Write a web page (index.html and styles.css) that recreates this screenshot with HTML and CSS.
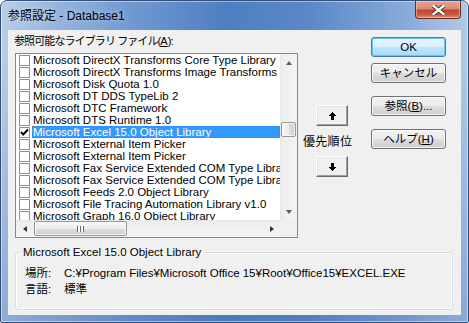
FILE: index.html
```html
<!DOCTYPE html>
<html lang="ja">
<head>
    <meta charset="UTF-8">
    <title>参照設定 - Database1</title>
    <link rel="stylesheet" href="styles.css">
</head>
<body>
    <div class="window">
        <div class="titlebar">
            <span class="title">参照設定 - Database1</span>
            <div class="close-btn">
                <svg width="13" height="10" viewBox="0 0 13 10">
                    <path d="M1.5 1 L11.5 9 M11.5 1 L1.5 9" stroke="#4a2a24" stroke-width="4.2" stroke-linecap="square"/>
                    <path d="M1.5 1 L11.5 9 M11.5 1 L1.5 9" stroke="#fff" stroke-width="2.4" stroke-linecap="square"/>
                </svg>
            </div>
        </div>

        <div class="client">
            <div class="top">
                <div class="list-col">
                    <div class="list-label">参照可能なライブラリ ファイル(<u>A</u>):</div>
                    <div class="listbox">
                        <div class="items">
                            <div class="row"><span class="box"></span><span class="name">Microsoft DirectX Transforms Core Type Library</span></div>
                            <div class="row"><span class="box"></span><span class="name">Microsoft DirectX Transforms Image Transforms Type Library</span></div>
                            <div class="row"><span class="box"></span><span class="name">Microsoft Disk Quota 1.0</span></div>
                            <div class="row"><span class="box"></span><span class="name">Microsoft DT DDS TypeLib 2</span></div>
                            <div class="row"><span class="box"></span><span class="name">Microsoft DTC Framework</span></div>
                            <div class="row"><span class="box"></span><span class="name">Microsoft DTS Runtime 1.0</span></div>
                            <div class="row selected">
                                <span class="box checked">
                                    <svg width="9" height="9" viewBox="0 0 9 9"><path d="M1 4 L3.3 6.5 L8 1.5" stroke="#000" stroke-width="1.9" fill="none"/></svg>
                                </span>
                                <span class="name">Microsoft Excel 15.0 Object Library</span>
                            </div>
                            <div class="row"><span class="box"></span><span class="name">Microsoft External Item Picker</span></div>
                            <div class="row"><span class="box"></span><span class="name">Microsoft External Item Picker</span></div>
                            <div class="row"><span class="box"></span><span class="name">Microsoft Fax Service Extended COM Type Library</span></div>
                            <div class="row"><span class="box"></span><span class="name">Microsoft Fax Service Extended COM Type Library</span></div>
                            <div class="row"><span class="box"></span><span class="name">Microsoft Feeds 2.0 Object Library</span></div>
                            <div class="row"><span class="box"></span><span class="name">Microsoft File Tracing Automation Library v1.0</span></div>
                            <div class="row"><span class="box"></span><span class="name">Microsoft Graph 16.0 Object Library</span></div>
                        </div>
                        <div class="vscroll">
                            <div class="sb-btn"><span class="tri up"></span></div>
                            <div class="sb-track"><div class="thumb-v"></div></div>
                            <div class="sb-btn"><span class="tri down"></span></div>
                        </div>
                        <div class="hscroll">
                            <div class="sb-btn"><span class="tri left"></span></div>
                            <div class="sb-track"><div class="thumb-h"><span class="grip"></span></div></div>
                            <div class="sb-btn"><span class="tri right"></span></div>
                        </div>
                        <div class="corner"></div>
                    </div>
                </div>

                <div class="priority">
                    <button class="classic">
                        <svg width="7" height="8" viewBox="0 0 7 8" shape-rendering="crispEdges"><path d="M3 0h1v1h1v1h1v1h1v1h-2v4h-3v-4h-2v-1h1v-1h1v-1h1z" fill="#000"/></svg>
                    </button>
                    <div class="priority-label">優先順位</div>
                    <button class="classic">
                        <svg width="7" height="8" viewBox="0 0 7 8" shape-rendering="crispEdges"><path d="M2 0h3v4h2v1h-1v1h-1v1h-1v1h-1v-1h-1v-1h-1v-1h-1v-1h2z" fill="#000"/></svg>
                    </button>
                </div>

                <div class="actions">
                    <button class="btn default">OK</button>
                    <button class="btn">キャンセル</button>
                    <button class="btn gap">参照(<u>B</u>)...</button>
                    <button class="btn gap">ヘルプ(<u>H</u>)</button>
                </div>
            </div>

            <fieldset class="details">
                <legend>Microsoft Excel 15.0 Object Library</legend>
                <div class="detail-grid">
                    <span>場所:</span><span>C:¥Program Files¥Microsoft Office 15¥Root¥Office15¥EXCEL.EXE</span>
                    <span>言語:</span><span>標準</span>
                </div>
            </fieldset>
        </div>
    </div>
</body>
</html>
```

FILE: styles.css
```css
body {margin: 0; font-family: "Liberation Sans", "Noto Sans CJK JP", sans-serif; font-size: 11.5px; color: #000}
button {font-family: inherit; font-size: 11.5px; color: #000; padding: 0; margin: 0}
u {text-decoration: underline; text-underline-offset: 1px}

/* window frame */
.window {width: 469px; height: 323px; box-sizing: border-box; border: 1px solid #34507a; border-radius: 7px 7px 2px 2px; padding: 0 7px 7px; display: flex; flex-direction: column;
    background: linear-gradient(to bottom, rgba(255,255,255,0) 0, rgba(255,255,255,0) 60px, rgba(70,110,180,0.35) 100%),
                linear-gradient(to right, #b8cee9 0%, #9ab7df 10%, #7099d0 28%, #4f7fc2 48%, #5a88c7 66%, #86a9d9 86%, #b2c9e7 100%);
    box-shadow: inset 0 0 0 1px rgba(255,255,255,0.45)}
.titlebar {height: 29px; display: flex; align-items: flex-start}
.title {margin-top: 8px; font-size: 12px; line-height: 15px; text-shadow: 0 0 6px rgba(255,255,255,0.6)}
.close-btn {margin-left: auto; width: 46px; height: 18px; box-sizing: border-box; border: 1px solid #6e2b20; border-top: none; border-radius: 0 0 4px 4px; display: flex; align-items: center; justify-content: center;
    background: linear-gradient(to bottom, #e8a493 0%, #d98a76 45%, #c3472e 55%, #c95a3c 80%, #e69478 100%);
    box-shadow: inset 0 0 0 1px rgba(255,220,210,0.45)}

/* client area */
.client {flex: 1; background: #f0f0f0; display: flex; flex-direction: column}
.top {display: flex}
.list-col {padding-left: 7px}
.list-label {margin: 4px 0 5px -1px; line-height: 14px; font-size: 11px; letter-spacing: -0.9px}
.list-label u {letter-spacing: 0}
.listbox {width: 283px; height: 185px; box-sizing: border-box; border: 1px solid #828790; background: #fff; display: grid; grid-template-columns: 1fr 17px; grid-template-rows: 1fr 17px}
.items {overflow: hidden}
.row {height: 12px; display: flex; align-items: center; white-space: nowrap; line-height: 12px}
.box {width: 11px; height: 11px; box-sizing: border-box; border: 1px solid #8f8f8f; background: #fff; margin: 0 2px 0 3px; flex: none; display: flex; align-items: center; justify-content: center}
.name {flex: 1; padding-left: 1px; height: 12px}
.selected .name {background: #3399ff; color: #fff; outline: 1px dotted #cc6600; outline-offset: -1px}

/* scrollbars */
.vscroll {display: flex; flex-direction: column; background: linear-gradient(to right, #e2e2e2 0, #ececec 1px, #f5f5f5 100%)}
.hscroll {display: flex; background: linear-gradient(to bottom, #e2e2e2 0, #ececec 1px, #f5f5f5 100%)}
.sb-btn {width: 17px; height: 17px; flex: none; display: flex; align-items: center; justify-content: center}
.sb-track {flex: 1}
.corner {background: #f0f0f0}
.tri {width: 0; height: 0; border: 0 solid transparent}
.tri.up {border-width: 0 3.5px 4px; border-bottom-color: #5b5b5b}
.tri.down {border-width: 4px 3.5px 0; border-top-color: #5b5b5b}
.tri.left {border-width: 3.5px 4px 3.5px 0; border-right-color: #333}
.tri.right {border-width: 3.5px 0 3.5px 4px; border-left-color: #333}
.thumb-v {margin: 51px 0 0 1px; width: 15px; height: 15px; box-sizing: border-box; border: 1px solid #979797; border-radius: 2px;
    background: linear-gradient(to right, #f6f6f6 0%, #ececec 50%, #dcdcdc 51%, #d0d0d0 100%); box-shadow: inset 0 0 0 1px rgba(255,255,255,0.7)}
.thumb-h {margin: 1px 0 0 1px; width: 93px; height: 15px; box-sizing: border-box; border: 1px solid #979797; border-radius: 2px; display: flex; align-items: center; justify-content: center;
    background: linear-gradient(to bottom, #f6f6f6 0%, #ececec 50%, #dcdcdc 51%, #d0d0d0 100%); box-shadow: inset 0 0 0 1px rgba(255,255,255,0.7)}
.grip {width: 7px; height: 6px; background: repeating-linear-gradient(to right, #6a6a6a 0 1px, #fafafa 1px 3px)}

/* move up / down */
.priority {width: 73px; padding: 75px 0 0 7px; box-sizing: border-box; display: flex; flex-direction: column; align-items: flex-start}
.classic {width: 32px; height: 21px; margin-left: 11px; box-sizing: border-box; background: #f0f0f0; border: 1px solid; border-color: #fff #696969 #696969 #fff; box-shadow: inset -1px -1px 0 #a0a0a0, inset 1px 1px 0 #e3e3e3; display: flex; align-items: center; justify-content: center}
.priority-label {margin: 9px 0 7px -2px; line-height: 14px; font-size: 12px; letter-spacing: 0.3px}

/* dialog buttons */
.actions {padding-top: 7px; display: flex; flex-direction: column; gap: 6px}
.btn {width: 75px; height: 20px; box-sizing: border-box; border: 1px solid #707070; border-radius: 3px; line-height: 16px;
    background: linear-gradient(to bottom, #f2f2f2 0%, #ebebeb 50%, #dddddd 51%, #cfcfcf 100%); box-shadow: inset 0 0 0 1px rgba(255,255,255,0.75)}
.btn.default {border-color: #3c7fb1; background: linear-gradient(to bottom, #eaf6fd 0%, #d9f0fc 50%, #bee6fd 51%, #a7d9f5 100%); box-shadow: inset 0 0 0 1px #62c8f5}
.btn.gap {margin-top: 7px}

/* details group box */
.details {margin: 7px 8px 0 7px; padding: 0 0 11px 9px; border: 1px solid #d5dfe5; border-radius: 3px; box-shadow: inset 0 0 0 1px #fff; min-width: 0}
.details legend {margin-left: -4px; padding: 0 2px; line-height: 14px}
.detail-grid {margin-top: 7px; display: grid; grid-template-columns: 39px 1fr; grid-auto-rows: 16px; line-height: 14px}
```
